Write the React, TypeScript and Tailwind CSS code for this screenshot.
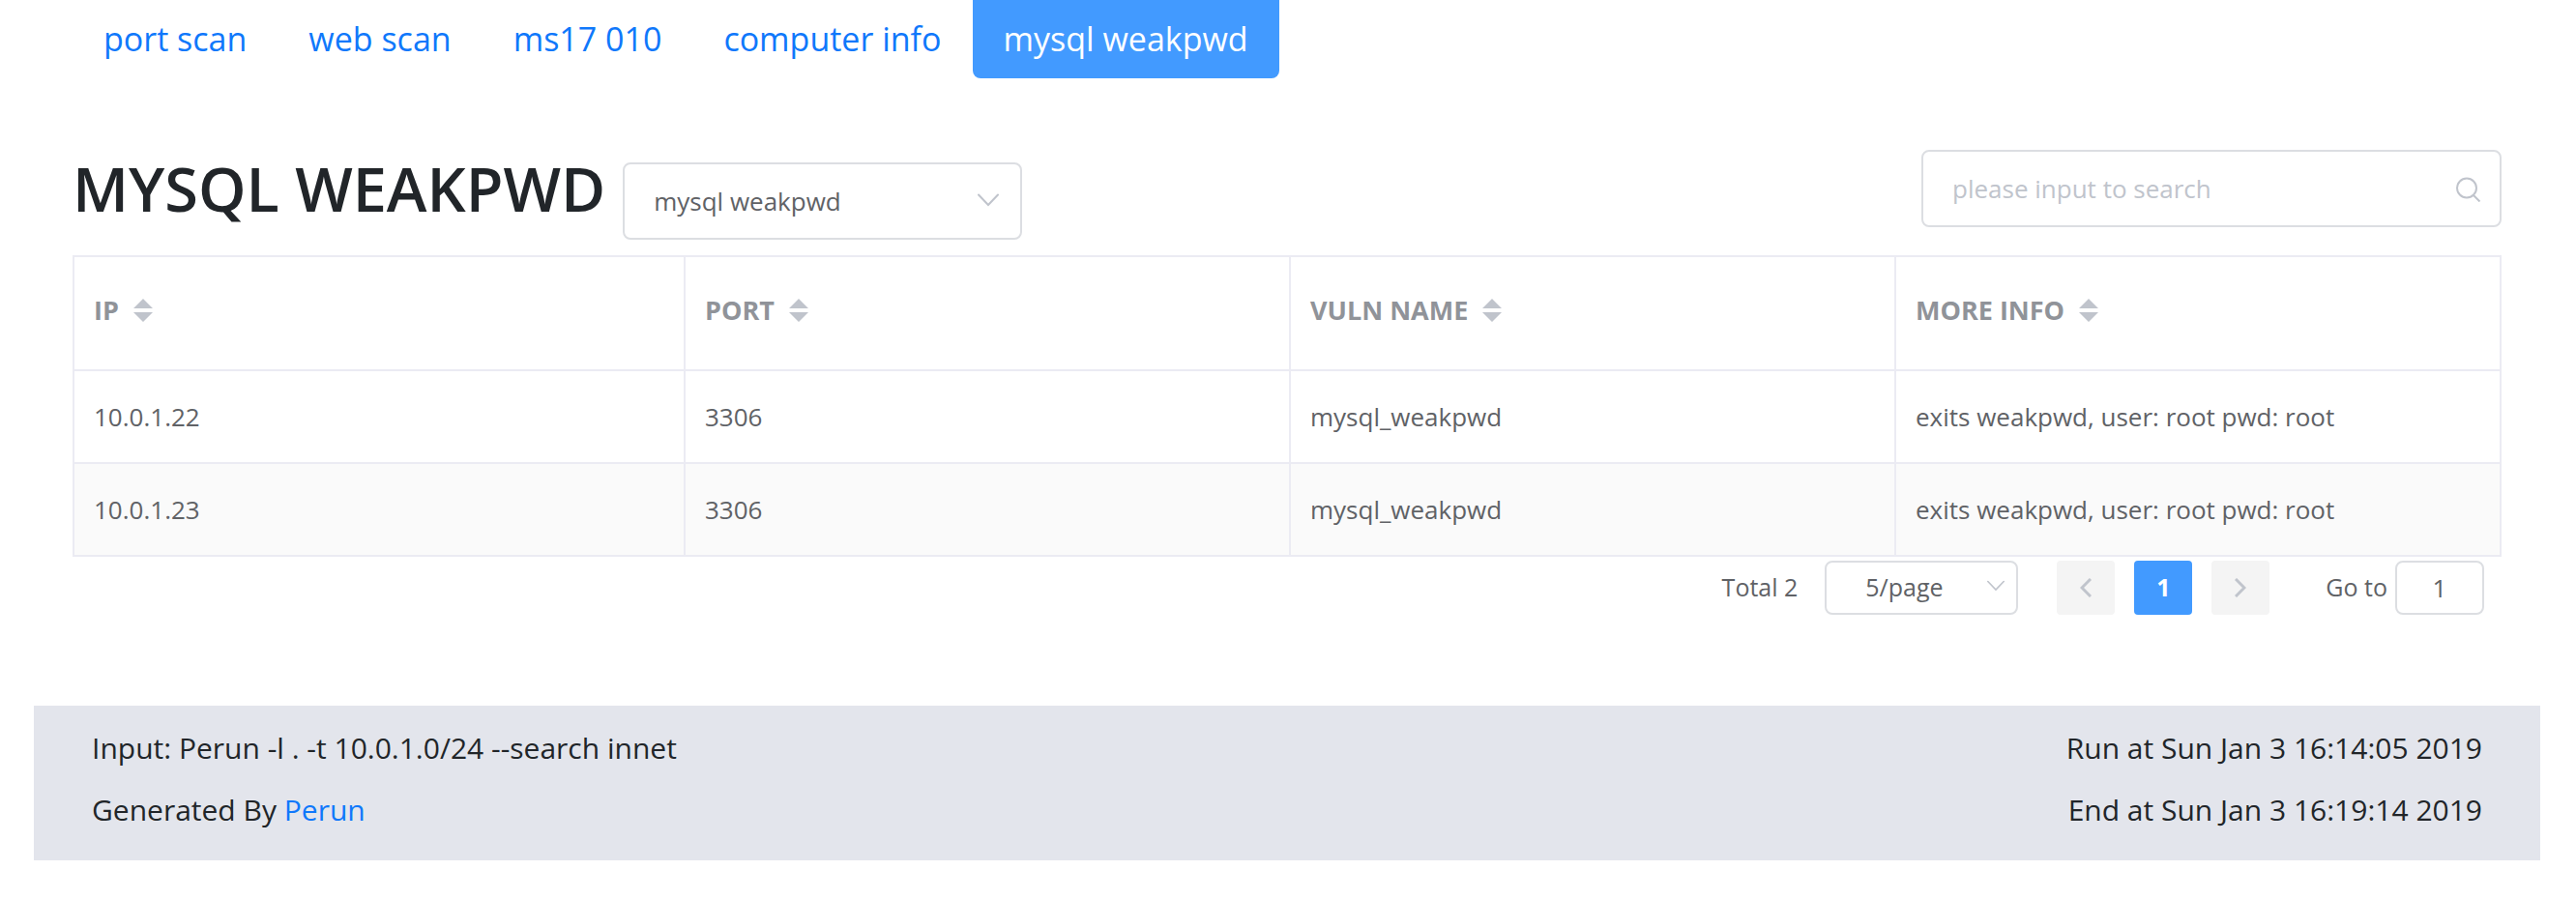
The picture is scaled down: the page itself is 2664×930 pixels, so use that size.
import React, { useState } from "react";

const tabs = ["port scan", "web scan", "ms17 010", "computer info", "mysql weakpwd"];
const columns = ["IP", "PORT", "VULN NAME", "MORE INFO"];
const rows = [
  ["10.0.1.22", "3306", "mysql_weakpwd", "exits weakpwd, user: root pwd: root"],
  ["10.0.1.23", "3306", "mysql_weakpwd", "exits weakpwd, user: root pwd: root"],
];

function ChevronDown({ className }: { className: string }) {
  return (
    <svg viewBox="0 0 22 14" fill="none" stroke="#c0c4cc" strokeWidth="2" strokeLinecap="round" className={className} aria-hidden="true">
      <path d="M1 1.5 11 12 21 1.5" />
    </svg>
  );
}

function SortCarets() {
  return (
    <svg viewBox="0 0 20 24" className="h-6 w-5 fill-[#c0c4cc]" aria-hidden="true">
      <path d="M10 0 20 10H0zM0 14h20L10 24z" />
    </svg>
  );
}

function PageArrow({ label, d }: { label: string; d: string }) {
  return (
    <button type="button" disabled aria-label={label} className="flex h-14 w-15 items-center justify-center rounded-sm bg-[#f4f4f4]">
      <svg viewBox="0 0 12 20" fill="none" stroke="#c0c4cc" strokeWidth="3" className="h-5 w-3" aria-hidden="true">
        <path d={d} />
      </svg>
    </button>
  );
}

export default function App() {
  const [query, setQuery] = useState("");
  const [page, setPage] = useState("1");
  const visible = rows.filter((row) => row.join(" ").includes(query));

  return (
    <div className="min-h-screen bg-white font-['Open_Sans',sans-serif] text-[#212529]">
      <div className="pr-[77px] pl-[75px]">
        <nav className="flex text-[34px] leading-[50px]">
          {tabs.map((tab, i) => (
            <a
              key={tab}
              href={"#" + tab.replace(" ", "-")}
              className={
                i === 4
                  ? "rounded-b-lg bg-[#429aff] px-8 pt-[15px] pb-4 text-white"
                  : "px-8 pt-[15px] pb-4 text-[#0f78fb]"
              }
            >
              {tab}
            </a>
          ))}
        </nav>

        <main>
          <header className="mt-[74px] flex items-start justify-between">
            <div className="flex items-start gap-[18px]">
              <h1 className="text-[63px] leading-[80px] font-semibold">MYSQL WEAKPWD</h1>
              <div className="relative mt-[13px]">
                <select
                  aria-label="Vulnerability"
                  className="h-20 w-[413px] appearance-none rounded-lg border-2 border-[#dcdee2] bg-white px-[30px] text-[26px] text-[#606266]"
                >
                  <option>mysql weakpwd</option>
                </select>
                <ChevronDown className="pointer-events-none absolute top-8 right-6 h-3.5 w-[22px]" />
              </div>
            </div>
            <div className="relative">
              <input
                type="search"
                aria-label="Search"
                placeholder="please input to search"
                value={query}
                onChange={(e) => setQuery(e.target.value)}
                className="h-20 w-[600px] rounded-lg border-2 border-[#dcdee2] bg-white pr-16 pl-[30px] text-[26px] text-[#606266] placeholder:text-[#c0c4cc]"
              />
              <svg viewBox="0 0 28 26" fill="none" stroke="#c0c4cc" strokeWidth="2" className="pointer-events-none absolute top-7 right-5 h-[26px] w-7" aria-hidden="true">
                <circle cx="12" cy="11.5" r="10" />
                <path d="m19 19 6.5 6.5" />
              </svg>
            </div>
          </header>

          <table className="mt-4 w-full table-fixed border-collapse border-2 border-[#ebebf3] text-left text-[26px] leading-9 text-[#606266]">
            <thead>
              <tr className="h-[118px] text-[27px] text-[#909399]">
                {columns.map((name) => (
                  <th key={name} scope="col" className="border-2 border-[#ebebf3] px-5 pb-1.5 font-bold first:w-[632px]">
                    <button type="button" className="flex items-center gap-[15px]">
                      {name}
                      <SortCarets />
                    </button>
                  </th>
                ))}
              </tr>
            </thead>
            <tbody>
              {visible.map((row) => (
                <tr key={row[0]} className="h-24 even:bg-[#fafafa]">
                  {row.map((cell, i) => (
                    <td key={i} className="border-2 border-[#ebebf3] px-5">{cell}</td>
                  ))}
                </tr>
              ))}
            </tbody>
          </table>

          <div className="mt-1 mr-[18px] flex items-center justify-end text-[25px] text-[#606266]">
            <span>Total 2</span>
            <div className="relative ml-7">
              <select aria-label="Rows per page" className="h-14 w-50 appearance-none rounded-lg border-2 border-[#dcdee2] bg-white pl-10 text-[25px]">
                <option>5/page</option>
              </select>
              <ChevronDown className="pointer-events-none absolute top-5 right-3.5 h-3 w-[18px]" />
            </div>
            <div className="ml-10 flex gap-5">
              <PageArrow label="Previous page" d="M11 1 2 10l9 9" />
              <button type="button" aria-current="page" className="h-14 w-15 rounded-sm bg-[#429aff] text-[25px] font-bold text-white">1</button>
              <PageArrow label="Next page" d="m1 1 9 9-9 9" />
            </div>
            <label htmlFor="goto" className="ml-[58px]">Go to</label>
            <input
              id="goto"
              value={page}
              onChange={(e) => setPage(e.target.value)}
              className="ml-2 h-14 w-23 rounded-lg border-2 border-[#dcdee2] bg-white text-center text-[26px]"
            />
          </div>
        </main>
      </div>

      <footer className="mr-[37px] ml-[35px] mt-[94px] flex h-40 justify-between bg-[#e3e5ec] px-15 pt-3 text-[30px] leading-16">
        <div>
          <p>Input: Perun -l . -t 10.0.1.0/24 --search innet</p>
          <p>Generated By <a href="#perun" className="text-[#0f78fb]">Perun</a></p>
        </div>
        <div className="text-right">
          <p>Run at Sun Jan 3 16:14:05 2019</p>
          <p>End at Sun Jan 3 16:19:14 2019</p>
        </div>
      </footer>
    </div>
  );
}
